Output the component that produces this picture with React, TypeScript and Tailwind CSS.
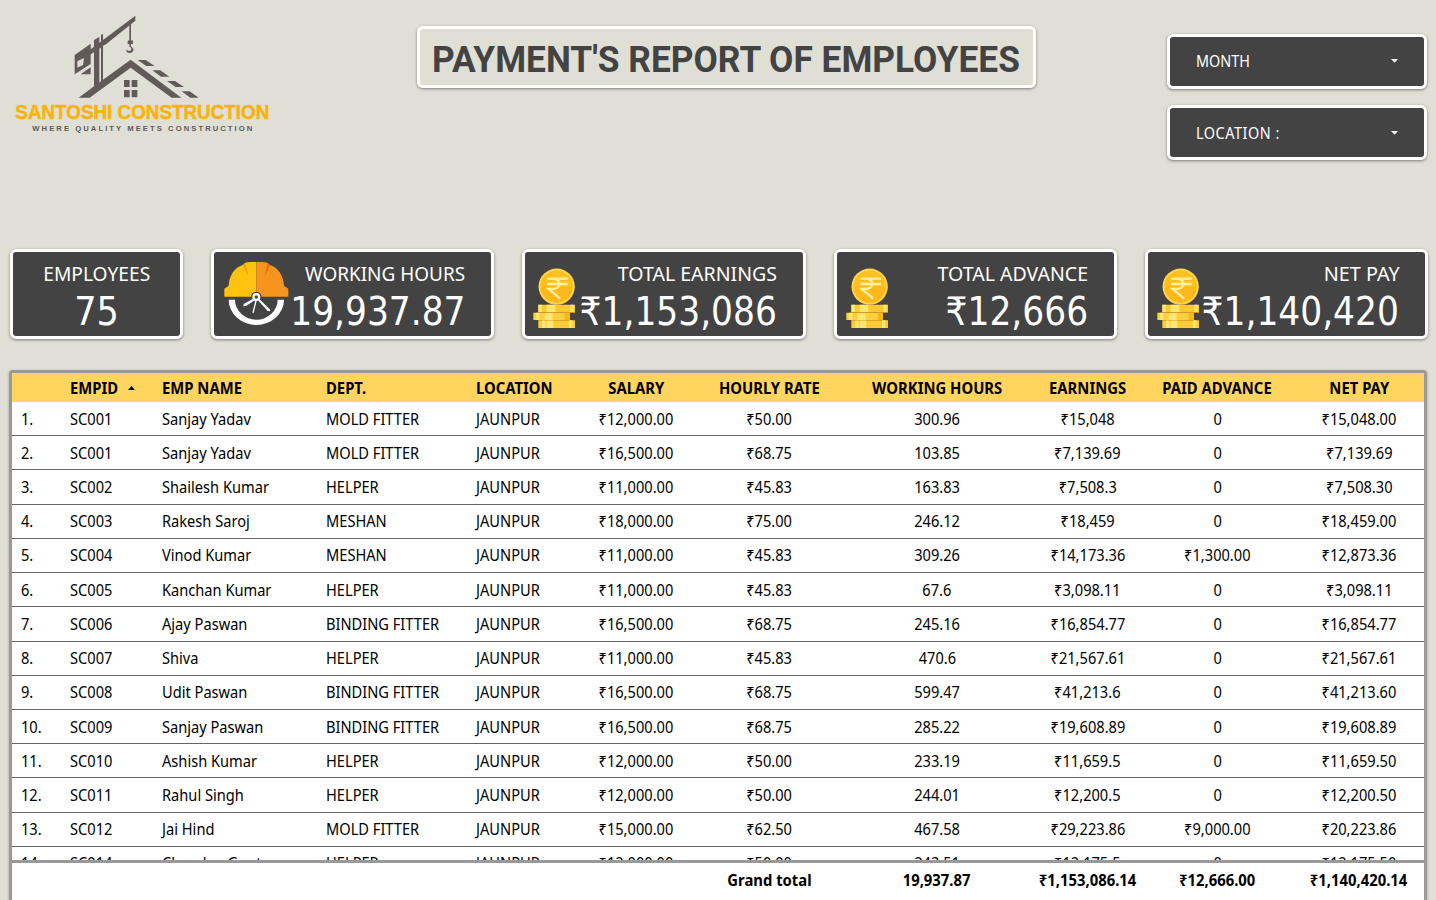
import React from 'react';

const CARD = 'rounded-md border-3 border-white shadow-[0_1px_3px_rgba(0,0,0,0.45)]';

type Row = [string, string, string, string, string, string, string, string, string];

const rows: Row[] = [
  ['SC001', 'Sanjay Yadav', 'MOLD FITTER', '₹12,000.00', '₹50.00', '300.96', '₹15,048', '0', '₹15,048.00'],
  ['SC001', 'Sanjay Yadav', 'MOLD FITTER', '₹16,500.00', '₹68.75', '103.85', '₹7,139.69', '0', '₹7,139.69'],
  ['SC002', 'Shailesh Kumar', 'HELPER', '₹11,000.00', '₹45.83', '163.83', '₹7,508.3', '0', '₹7,508.30'],
  ['SC003', 'Rakesh Saroj', 'MESHAN', '₹18,000.00', '₹75.00', '246.12', '₹18,459', '0', '₹18,459.00'],
  ['SC004', 'Vinod Kumar', 'MESHAN', '₹11,000.00', '₹45.83', '309.26', '₹14,173.36', '₹1,300.00', '₹12,873.36'],
  ['SC005', 'Kanchan Kumar', 'HELPER', '₹11,000.00', '₹45.83', '67.6', '₹3,098.11', '0', '₹3,098.11'],
  ['SC006', 'Ajay Paswan', 'BINDING FITTER', '₹16,500.00', '₹68.75', '245.16', '₹16,854.77', '0', '₹16,854.77'],
  ['SC007', 'Shiva', 'HELPER', '₹11,000.00', '₹45.83', '470.6', '₹21,567.61', '0', '₹21,567.61'],
  ['SC008', 'Udit Paswan', 'BINDING FITTER', '₹16,500.00', '₹68.75', '599.47', '₹41,213.6', '0', '₹41,213.60'],
  ['SC009', 'Sanjay Paswan', 'BINDING FITTER', '₹16,500.00', '₹68.75', '285.22', '₹19,608.89', '0', '₹19,608.89'],
  ['SC010', 'Ashish Kumar', 'HELPER', '₹12,000.00', '₹50.00', '233.19', '₹11,659.5', '0', '₹11,659.50'],
  ['SC011', 'Rahul Singh', 'HELPER', '₹12,000.00', '₹50.00', '244.01', '₹12,200.5', '0', '₹12,200.50'],
  ['SC012', 'Jai Hind', 'MOLD FITTER', '₹15,000.00', '₹62.50', '467.58', '₹29,223.86', '₹9,000.00', '₹20,223.86'],
  ['SC014', 'Chandan Gupta', 'HELPER', '₹12,000.00', '₹50.00', '243.51', '₹12,175.5', '0', '₹12,175.50'],
];

const GRID =
  'grid grid-cols-[58px_92px_163.5px_150px_95.5px_130px_136px_200px_101px_159px_124px] items-center';

function Left({ children, bold }: { children?: React.ReactNode; bold?: boolean }) {
  return (
    <div className="whitespace-nowrap">
      <span className={`inline-block origin-left ${bold ? 'scale-x-[0.927]' : 'scale-x-[0.914]'}`}>{children}</span>
    </div>
  );
}

function Mid({ children, bold }: { children?: React.ReactNode; bold?: boolean }) {
  return (
    <div className="flex justify-center whitespace-nowrap">
      <span className={`inline-block ${bold ? 'scale-x-[0.927]' : 'scale-x-[0.914]'}`}>{children}</span>
    </div>
  );
}

function Logo() {
  return (
    <svg width="290" height="145" viewBox="0 0 870 435" className="block">
      <g fill="#625a58">
        <path d="M406 47v15L316 134l-12 4-34 25v-14l34-25z" />
        <path d="M388 68h5v54h6v10h-6v8c10 3 11 17-4 19-8 0-12-5-10-11 3 6 14 7 15-1 0-4-2-6-6-6v-9h-5v-10h5z" />
        <path d="M384 122h15v10h-15z" />
        <path fillRule="evenodd" d="M224 165l48-34v61l-48 31zM232 184v19l17-8 3-21z" />
        <path d="M272 202v21h-30z" />
        <path d="M282 120l16-9v137l-16 12zM303 105l6-4v146l-6 3z" />
        <path d="M270 152l40-26v12l-40 26z" />
        <path d="M236 293l46-34 110-80 152 114h-29L392 203 269 293z" />
        <path d="M413 180h24l27 18h-25zM457 211h24l27 19h-25zM501 243h24l27 18h-25zM545 274h24l27 19h-25z" />
        <path d="M372 240h17v21h-17zM395 240h17v21h-17zM372 270h17v22h-17zM395 270h17v22h-17z" />
      </g>
      <text x="46" y="356" fontSize="61" fontWeight="bold" fontFamily="Liberation Sans, sans-serif" fill="#fbb30c" stroke="#fbb30c" strokeWidth="1.5" textLength="762" lengthAdjust="spacingAndGlyphs">
        SANTOSHI CONSTRUCTION
      </text>
      <text x="97" y="392" fontSize="23" fontWeight="bold" fontFamily="Liberation Sans, sans-serif" fill="#625a58" textLength="660" lengthAdjust="spacing">
        WHERE QUALITY MEETS CONSTRUCTION
      </text>
    </svg>
  );
}

function HelmetIcon() {
  return (
    <svg width="66" height="66" viewBox="0 0 198 198" className="block">
      <path d="M14 116h19a64 60 0 0 0 128 0h19a83 76 0 0 1-166 0z" fill="#fff" />
      <path d="M97 3v104H1V83l13-9C16 42 32 20 56 12l8-7c10-2 20-2 33-2z" fill="#ffc20e" />
      <path d="M97 3c12 0 24 0 33 2l8 7c24 8 40 30 42 62l13 9v24H97z" fill="#f7941e" />
      <path d="M56 12l8-6 10 42z" fill="#e9a800" />
      <path d="M138 12l-8-6-9 42z" fill="#dd7510" />
      <circle cx="97" cy="108" r="16" fill="#434343" />
      <circle cx="97" cy="108" r="8.5" fill="none" stroke="#fff" strokeWidth="7" />
      <path d="M88 113L60 128l-3 8 9-1 26-17zM105 113l34 33-1 5-7-1-29-32zM94 119l-9 36 4 1 9-36z" fill="#fff" />
    </svg>
  );
}

function CoinsIcon() {
  return (
    <svg width="44" height="62" viewBox="0 0 132 186" className="block">
      <circle cx="71" cy="56" r="54.5" fill="#fdd44c" />
      <circle cx="71" cy="56" r="48" fill="#fdb91b" />
      <path d="M23 56a48 48 0 0 1 96 0c-24 4-52-10-96 0z" fill="#fdc01f" />
      <path d="M43 32h62M43 48h62M56 32c32 0 32 31 0 31h-9l35 29" fill="none" stroke="#fff09c" strokeWidth="7" />
      <path d="M16 110h110v22H16z" fill="#fdc92f" />
      <path d="M16 110h11v22H16zM41 110h26v22H41zM112 110h10v22h-10z" fill="#fee673" />
      <path d="M1 134h110v22H1z" fill="#fdcf3d" />
      <path d="M9 134h10v22H9zM35 134h24v22H35z" fill="#fee673" />
      <path d="M95 134h16v22H95z" fill="#fbb41a" />
      <path d="M16 157h110v23H16z" fill="#fdcb33" />
      <path d="M27 157h11v23H27zM41 157h20v23H41zM108 157h10v23h-10z" fill="#fee673" />
      <path d="M16 132h110v2H16zM16 156h96v1.5H16z" fill="#f0a91c" />
    </svg>
  );
}

function Filter({ label, tracking }: { label: string; tracking: string }) {
  return (
    <div className={`${CARD} flex h-[55px] w-[260.5px] items-center justify-between bg-[#434343] pl-[26.5px] pr-[26px] text-base text-white`}>
      <span className={`inline-block origin-left scale-x-[0.9] whitespace-nowrap ${tracking}`}>{label}</span>
      <svg width="7" height="4" viewBox="0 0 7 4">
        <path d="M0 0h7L3.5 3.7z" fill="#fff" />
      </svg>
    </div>
  );
}

interface StatProps {
  label: string;
  value: string;
  icon: React.ReactNode;
  iconClass: string;
  labelScale: string;
}

function Stat({ label, value, icon, iconClass, labelScale }: StatProps) {
  return (
    <div className={`${CARD} relative flex h-[90px] w-[283.3px] flex-col items-end bg-[#434343] pr-[26px] text-white`}>
      <div className={`absolute ${iconClass}`}>{icon}</div>
      <span className={`mt-2 block origin-right whitespace-nowrap text-xl leading-7 ${labelScale}`}>{label}</span>
      <span className="mt-[1px] block origin-right scale-x-[0.982] whitespace-nowrap font-['DejaVu_Sans_Condensed','DejaVu_Sans','Noto_Sans',sans-serif] text-[39px] leading-[46px] font-stretch-condensed">
        {value}
      </span>
    </div>
  );
}

export default function App() {
  return (
    <div className="flex h-[900px] w-[1436px] flex-col overflow-hidden bg-[#dfdfd6] font-['Noto_Sans',sans-serif] text-black">
      <header className="flex h-[249px] shrink-0 items-start">
        <Logo />
        <div className={`${CARD} ml-[127px] mt-[26px] flex h-[62px] w-[618.5px] items-center justify-center`}>
          <h1 className="mt-[5px] scale-x-[0.98] whitespace-nowrap font-['Roboto',sans-serif] text-[36px] font-bold text-[#434343]">
            PAYMENT'S REPORT OF EMPLOYEES
          </h1>
        </div>
        <div className="ml-[131px] mt-[33.5px] flex flex-col gap-[16.5px]">
          <Filter label="MONTH" tracking="tracking-normal" />
          <Filter label="LOCATION :" tracking="tracking-[0.6px]" />
        </div>
      </header>

      <section className="flex shrink-0 gap-7 pl-[10px]">
        <div className={`${CARD} flex h-[90px] w-[173px] flex-col items-center bg-[#434343] text-white`}>
          <span className="mt-2 block scale-x-[0.96] whitespace-nowrap text-xl leading-7">EMPLOYEES</span>
          <span className="mt-[1px] block whitespace-nowrap font-['DejaVu_Sans_Condensed','DejaVu_Sans',sans-serif] text-[39px] leading-[46px] font-stretch-condensed">
            75
          </span>
        </div>
        <Stat label="WORKING HOURS" value="19,937.87" icon={<HelmetIcon />} iconClass="left-[10px] top-[9px]" labelScale="scale-x-[0.947]" />
        <Stat label="TOTAL EARNINGS" value="₹1,153,086" icon={<CoinsIcon />} iconClass="left-[8px] top-[16px]" labelScale="scale-x-[0.977]" />
        <Stat label="TOTAL ADVANCE" value="₹12,666" icon={<CoinsIcon />} iconClass="left-[9px] top-[16px]" labelScale="scale-x-[0.977]" />
        <Stat label="NET PAY" value="₹1,140,420" icon={<CoinsIcon />} iconClass="left-[9px] top-[16px]" labelScale="scale-x-[0.99]" />
      </section>

      <main className="ml-[9px] mt-[31px] flex h-[540px] w-[1418px] shrink-0 flex-col rounded-t border-x-3 border-t-3 border-[#999] bg-white text-base leading-6 shadow-[0_1px_3px_rgba(0,0,0,0.3)]">
        <div className={`${GRID} h-[29px] shrink-0 bg-[#ffd45f] font-bold`}>
          <div />
          <div className="flex items-center gap-[6px]">
            <Left bold>EMPID</Left>
            <svg width="7" height="4" viewBox="0 0 7 4">
              <path d="M0 4h7L3.5 0z" fill="#000" />
            </svg>
          </div>
          <Left bold>EMP NAME</Left>
          <Left bold>DEPT.</Left>
          <Left bold>LOCATION</Left>
          <Mid bold>SALARY</Mid>
          <Mid bold>HOURLY RATE</Mid>
          <Mid bold>WORKING HOURS</Mid>
          <Mid bold>EARNINGS</Mid>
          <Mid bold>PAID ADVANCE</Mid>
          <Mid bold>NET PAY</Mid>
        </div>
        <div className="h-[458px] shrink-0 overflow-hidden">
          {rows.map((r, i) => (
            <div key={i} className={`${GRID} h-[34.23px] border-b border-[#666]`}>
              <div className="pl-[9px]">
                <Left>{i + 1}.</Left>
              </div>
              <Left>{r[0]}</Left>
              <Left>{r[1]}</Left>
              <Left>{r[2]}</Left>
              <Left>JAUNPUR</Left>
              <Mid>{r[3]}</Mid>
              <Mid>{r[4]}</Mid>
              <Mid>{r[5]}</Mid>
              <Mid>{r[6]}</Mid>
              <Mid>{r[7]}</Mid>
              <Mid>{r[8]}</Mid>
            </div>
          ))}
        </div>
        <div className={`${GRID} h-[37px] shrink-0 border-t-3 border-[#999] font-bold`}>
          <div className="col-span-6" />
          <Mid bold>Grand total</Mid>
          <Mid bold>19,937.87</Mid>
          <Mid bold>₹1,153,086.14</Mid>
          <Mid bold>₹12,666.00</Mid>
          <Mid bold>₹1,140,420.14</Mid>
        </div>
      </main>
    </div>
  );
}
